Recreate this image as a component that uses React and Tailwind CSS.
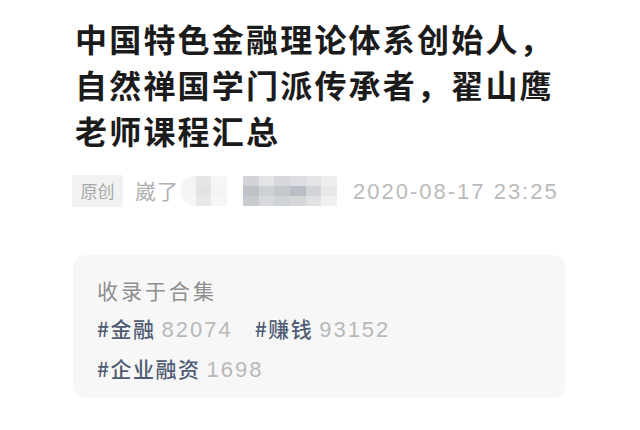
import React from 'react';

const cjk = { fontFamily: '"Noto Sans CJK SC", "Noto Sans", sans-serif' };

const mosaic = [
  ['#f3f3f3', '#e6e6e6', '#f6f6f6', '#ffffff', '#d2d4d8', '#e2e4e6', '#d6d8dc', '#dcdee2', '#e4e5e7', '#eeeeee'],
  ['#f5f5f5', '#e3e3e3', '#f4f4f4', '#ffffff', '#bfc2c8', '#cdd0d4', '#c4c7cd', '#b9bdc5', '#d2d4d8', '#e7e8ea'],
  ['#f6f6f6', '#e8e8e8', '#f6f6f6', '#ffffff', '#c8cbd0', '#d7d9dc', '#cfd2d6', '#d4d6da', '#e0e1e3', '#f0f0f0'],
];

function Tag({ name, count }) {
  return (
    <span className="inline-flex items-baseline">
      <span className="text-[#4f5b73] font-medium tracking-[1.5px]">#{name}</span>
      <span className="ml-[6px] text-[22px] text-[#b8b8b8] tracking-[2px]" style={{ fontFamily: '"Liberation Sans", sans-serif' }}>{count}</span>
    </span>
  );
}

export default function App() {
  return (
    <div className="w-[640px] h-[430px] bg-white overflow-hidden" style={cjk}>
      <h1 className="pl-[75px] pt-[15px] text-[32px] leading-[46px] font-bold text-[#1b1b1b] tracking-[2.2px]">
        中国特色金融理论体系创始人，<br />
        自然禅国学门派传承者，翟山鹰<br />
        老师课程汇总
      </h1>

      <div className="mt-[22px] ml-[72px] flex items-center h-[32px]">
        <span className="h-[32px] w-[51px] flex items-center justify-center bg-[#f2f2f2] text-[#a8a8a8] text-[17px]">原创</span>
        <span className="ml-[12px] text-[#b0b0b0] text-[21px] tracking-[1px]">崴了</span>
        <div className="ml-[1px] flex flex-col w-[157px] h-[30px] rounded-l-full overflow-hidden">
          {mosaic.map((row, i) => (
            <div key={i} className="flex flex-1">
              {row.map((c, j) => (
                <div key={j} className="flex-1" style={{ background: c }} />
              ))}
            </div>
          ))}
        </div>
        <span
          className="ml-[16px] text-[22px] tracking-[2px] text-[#bababa]"
          style={{ fontFamily: '"Liberation Sans", sans-serif' }}
        >
          2020-08-17 23:25
        </span>
      </div>

      <div className="mt-[48px] ml-[73px] w-[492px] h-[143px] rounded-[12px] bg-[#f7f7f7] pl-[24px] pt-[18px] text-[21px]">
        <div className="text-[#8e8e8e] tracking-[3px] leading-[34px]">收录于合集</div>
        <div className="leading-[39px] mt-[2px] flex gap-[22px]">
          <Tag name="金融" count="82074" />
          <Tag name="赚钱" count="93152" />
        </div>
        <div className="leading-[39px]">
          <Tag name="企业融资" count="1698" />
        </div>
      </div>
    </div>
  );
}
